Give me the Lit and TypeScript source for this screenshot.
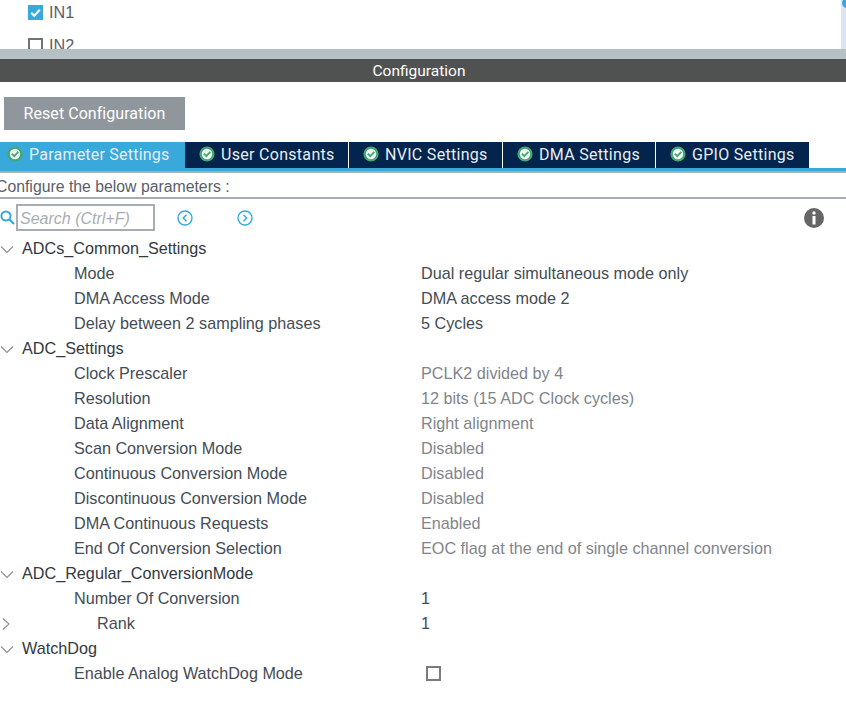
import { LitElement, html, css, svg } from "lit";
import { customElement } from "lit/decorators.js";

type Row = { k: "g" | "p" | "c"; label: string; value?: string; dim?: boolean; check?: boolean };

const rows: Row[] = [
  { k: "g", label: "ADCs_Common_Settings" },
  { k: "p", label: "Mode", value: "Dual regular simultaneous mode only" },
  { k: "p", label: "DMA Access Mode", value: "DMA access mode 2" },
  { k: "p", label: "Delay between 2 sampling phases", value: "5 Cycles" },
  { k: "g", label: "ADC_Settings" },
  { k: "p", label: "Clock Prescaler", value: "PCLK2 divided by 4", dim: true },
  { k: "p", label: "Resolution", value: "12 bits (15 ADC Clock cycles)", dim: true },
  { k: "p", label: "Data Alignment", value: "Right alignment", dim: true },
  { k: "p", label: "Scan Conversion Mode", value: "Disabled", dim: true },
  { k: "p", label: "Continuous Conversion Mode", value: "Disabled", dim: true },
  { k: "p", label: "Discontinuous Conversion Mode", value: "Disabled", dim: true },
  { k: "p", label: "DMA Continuous Requests", value: "Enabled", dim: true },
  { k: "p", label: "End Of Conversion Selection", value: "EOC flag at the end of single channel conversion", dim: true },
  { k: "g", label: "ADC_Regular_ConversionMode" },
  { k: "p", label: "Number Of Conversion", value: "1" },
  { k: "c", label: "Rank", value: "1" },
  { k: "g", label: "WatchDog" },
  { k: "p", label: "Enable Analog WatchDog Mode", check: true },
];

const tabs = ["Parameter Settings", "User Constants", "NVIC Settings", "DMA Settings", "GPIO Settings"];
const tabWidths = [185, 164, 154, 153, 154];

const okIcon = svg`<svg class="ok" viewBox="0 0 16 16" width="16" height="16"><circle cx="8" cy="8" r="7.6" fill="#43a873"/><circle cx="8" cy="8" r="5.2" fill="#f2faf5"/><path d="M4.8 7.6 7.3 10.2 11.4 5.8" fill="none" stroke="#43a873" stroke-width="1.9"/></svg>`;
const down = svg`<svg class="chev" viewBox="0 0 14 14" width="14" height="14"><path d="M1 4.5 7 10.5 13 4.5" fill="none" stroke="#8a8f93" stroke-width="1.1"/></svg>`;
const right = svg`<svg class="chev" viewBox="0 0 14 14" width="14" height="14"><path d="M3 1.5 9 7 3 12.5" fill="none" stroke="#8a8f93" stroke-width="1.1"/></svg>`;

@customElement("app-root")
export class AppRoot extends LitElement {
  static styles = css`
    :host { display: block; width: 846px; height: 705px; overflow: hidden; background: #fff; font-family: "Liberation Sans", Arial, sans-serif; font-size: 16.2px; color: #3c4650; }
    .top { height: 49px; position: relative; overflow: hidden; }
    .pin { display: flex; align-items: center; gap: 6px; height: 33px; padding-left: 28px; color: #5a6068; margin-top: -4px; }
    .pin + .pin { margin-top: 0; }
    .box { width: 15px; height: 15px; box-sizing: border-box; border: 2px solid #6f7478; display: block; }
    .box.on { background: #39a9dc; border: none; }
    .scroll { position: absolute; right: 0; top: 0; bottom: 0; width: 5px; background: #d8e6f5; }
    .thumb { position: absolute; left: 1px; top: -2px; width: 10px; height: 10px; border-radius: 50%; background: #39a9dc; }
    .sash { height: 10px; background: #b5c0c5; }
    .title { height: 23px; line-height: 24px; background: #505252; color: #fff; text-align: center; font-size: 15.5px; padding-right: 8px; box-sizing: border-box; font-family: Roboto, sans-serif; }
    .tools { height: 60px; box-sizing: border-box; padding: 15px 0 0 4px; }
    .reset { width: 181px; height: 33px; line-height: 33px; background: #8f979d; color: #fff; text-align: center; font-size: 16px; font-family: Roboto, sans-serif; letter-spacing: 0.05px; }
    .tabs { display: flex; height: 26px; font-family: Roboto, sans-serif; }
    .tab { display: flex; align-items: center; background: #03244d; color: #e8edf2; border-right: 1.5px solid #fff; box-sizing: border-box; height: 26px; padding: 0 0 2px 14px; gap: 6px; font-size: 16px; letter-spacing: 0.3px; white-space: nowrap; }
    .tab.on { background: #39a9dc; padding-left: 7px; border-right: none; letter-spacing: 0.22px; }
    .ok { flex: none; }
    .rule { height: 5px; box-sizing: border-box; background: #39a9dc; border-bottom: 2px solid #a6adb3; }
    .hint { height: 26px; line-height: 27px; box-sizing: border-box; margin-left: -4px; border-bottom: 2px solid #a6adb3; color: #5a6068; white-space: nowrap; font-size: 15.8px; }
    .search { height: 37px; display: flex; align-items: center; position: relative; }
    .mag { margin-left: 0; margin-right: 1px; flex: none; }
    .input { width: 139px; height: 27px; line-height: 25px; box-sizing: border-box; border: 2px solid #a6adb3; padding-left: 2px; color: #a9aeb3; font-style: italic; white-space: nowrap; font-size: 16px; }
    .nav { flex: none; }
    .nav.a { margin-left: 22px; }
    .nav.b { margin-left: 44px; }
    .info { margin-left: auto; margin-right: 22px; flex: none; }
    .list { display: flex; flex-direction: column; }
    .row { height: 25px; display: grid; grid-template-columns: 421px 1fr; align-items: center; white-space: nowrap; line-height: 25px; }
    .name { display: flex; align-items: center; }
    .chev { flex: none; margin-left: 0; margin-right: 8px; }
    .g { color: #32393f; }
    .p .name { padding-left: 74px; color: #444c55; }
    .c .name { color: #444c55; }
    .c .name span { margin-left: 75px; }
    .val { color: #444c55; }
    .val.dim { color: #7f858b; }
    .cb { width: 15px; height: 15px; box-sizing: border-box; border: 2px solid #777c80; margin-left: 5px; }
  `;

  render() {
    return html`
      <div class="top">
        <div class="pin"><span class="box on"><svg viewBox="0 0 14 14" width="15" height="15"><path d="M3 7.2 5.8 10 11 4.5" fill="none" stroke="#fff" stroke-width="2"/></svg></span>IN1</div>
        <div class="pin"><span class="box"></span>IN2</div>
        <div class="scroll"><div class="thumb"></div></div>
      </div>
      <div class="sash"></div>
      <div class="title">Configuration</div>
      <div class="tools"><div class="reset">Reset Configuration</div></div>
      <div class="tabs">
        ${tabs.map((t, i) => html`<div class="tab ${i === 0 ? "on" : ""}" style="width:${tabWidths[i]}px">${okIcon}<span>${t}</span></div>`)}
      </div>
      <div class="rule"></div>
      <div class="hint">Configure the below parameters :</div>
      <div class="search">
        <svg class="mag" viewBox="0 0 15 15" width="15" height="15"><circle cx="6" cy="6" r="4.6" fill="none" stroke="#39a9dc" stroke-width="2"/><path d="M9.5 9.5 14 14" stroke="#39a9dc" stroke-width="2.2"/></svg>
        <div class="input">Search (Ctrl+F)</div>
        <svg class="nav a" viewBox="0 0 16 16" width="16" height="16"><circle cx="8" cy="8" r="7" fill="none" stroke="#39a9dc" stroke-width="1.4"/><path d="M9.5 4.8 6.3 8 9.5 11.2" fill="none" stroke="#39a9dc" stroke-width="1.5"/></svg>
        <svg class="nav b" viewBox="0 0 16 16" width="16" height="16"><circle cx="8" cy="8" r="7" fill="none" stroke="#39a9dc" stroke-width="1.4"/><path d="M6.5 4.8 9.7 8 6.5 11.2" fill="none" stroke="#39a9dc" stroke-width="1.5"/></svg>
        <svg class="info" viewBox="0 0 20 20" width="20" height="20"><circle cx="10" cy="10" r="10" fill="#666"/><circle cx="10" cy="5" r="1.7" fill="#fff"/><rect x="8.5" y="8" width="3" height="8.5" fill="#fff"/></svg>
      </div>
      <div class="list">
        ${rows.map((r) => html`<div class="row ${r.k}">
          <div class="name">
            ${r.k === "g" ? down : r.k === "c" ? right : ""}
            <span>${r.label}</span>
          </div>
          ${r.check ? html`<div class="cb"></div>` : html`<div class="val ${r.dim ? "dim" : ""}">${r.value ?? ""}</div>`}
        </div>`)}
      </div>
    `;
  }
}
